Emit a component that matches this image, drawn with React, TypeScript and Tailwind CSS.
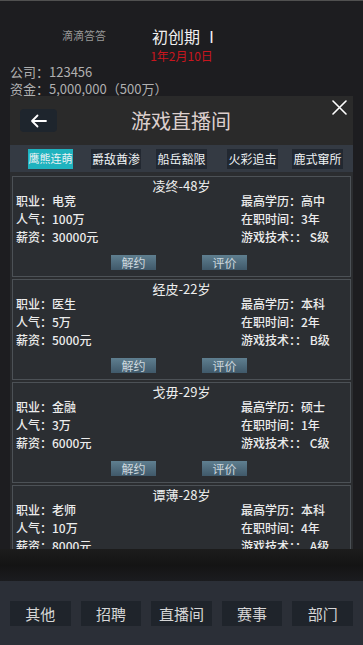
import React from 'react';

type Streamer = {
  name: string;
  job: string;
  fame: string;
  pay: string;
  edu: string;
  years: string;
  skill: string;
};

const streamers: Streamer[] = [
  { name: '凌终-48岁', job: '电竞', fame: '100万', pay: '30000元', edu: '高中', years: '3年', skill: 'S级' },
  { name: '经皮-22岁', job: '医生', fame: '5万', pay: '5000元', edu: '本科', years: '2年', skill: 'B级' },
  { name: '戈毋-29岁', job: '金融', fame: '3万', pay: '6000元', edu: '硕士', years: '1年', skill: 'C级' },
  { name: '谭薄-28岁', job: '老师', fame: '10万', pay: '8000元', edu: '本科', years: '4年', skill: 'A级' },
];

const tabs = [
  { label: '鹰熊连萌', cls: 'ml-[18px] w-[45px] bg-[#1fb3bf] text-[11px]' },
  { label: '爵敌酋渗', cls: 'ml-[18px] w-[50px] bg-[#222831] text-[12px]' },
  { label: '船岳豁限', cls: 'ml-[15px] w-[51px] bg-[#222831] text-[12px]' },
  { label: '火彩追击', cls: 'ml-[20px] w-[51px] bg-[#222831] text-[12px]' },
  { label: '鹿式窜所', cls: 'ml-[14px] w-[51px] bg-[#222831] text-[12px]' },
];

const navItems = ['其他', '招聘', '直播间', '赛事', '部门'];

function StreamerCard({ s }: { s: Streamer }) {
  return (
    <div className="h-[101px] shrink-0 border border-[#4c5156] bg-[#2b2e32] px-[3px] pt-[3px]">
      <div className="text-center text-[13px] leading-[12px] text-[#eeeeee]">{s.name}</div>
      <div className="flex text-[12px] font-medium leading-[18px] text-[#ececec]">
        <div className="w-[225px]">
          <div>职业：{s.job}</div>
          <div>人气：{s.fame}</div>
          <div>薪资：{s.pay}</div>
        </div>
        <div>
          <div>最高学历：{s.edu}</div>
          <div>在职时间：{s.years}</div>
          <div>游戏技术：：&nbsp;{s.skill}</div>
        </div>
      </div>
      <div className="mt-[9px] flex">
        <button className="ml-[95px] h-[15px] w-[45px] bg-gradient-to-b from-[#5f7f90] to-[#40596a] text-[12px] leading-[15px] text-[#cdd8de]">
          解约
        </button>
        <button className="ml-[46px] h-[15px] w-[45px] bg-gradient-to-b from-[#5f7f90] to-[#40596a] text-[12px] leading-[15px] text-[#cdd8de]">
          评价
        </button>
      </div>
    </div>
  );
}

function App() {
  return (
    <div
      className="flex h-[645px] w-[363px] flex-col overflow-hidden border-t border-[#505050] bg-[#1d1d20]"
      style={{ fontFamily: '"Noto Sans CJK SC", "Noto Sans", sans-serif' }}
    >
      {/* top status */}
      <div className="h-[95px] shrink-0">
        <div className="flex pt-[25px]">
          <span className="ml-[62px] w-[90px] pt-[1px] text-[11px] leading-[16px] text-[#9a9a9a]">滴滴答答</span>
          <span className="text-[16px] leading-[20px] text-[#f0f0f0]">初创期 Ⅰ</span>
        </div>
        <div className="mt-[2px] text-center text-[12px] leading-[16px] text-[#c8161e]">1年2月10日</div>
        <div className="mt-[-1px] pl-[10px] text-[13px] leading-[17px] text-[#b0b0b0]">
          <div>公司：123456</div>
          <div>资金：5,000,000（500万）</div>
        </div>
      </div>

      {/* modal */}
      <div className="mx-[10px] flex h-[453px] shrink-0 flex-col bg-[#2b2d30]">
        <div className="relative flex h-[49px] shrink-0 items-center bg-[#2a2a2a]">
          <button className="ml-[10px] flex h-[23px] w-[37px] items-center justify-center rounded-[4px] bg-[#1e252d]">
            <svg width="17" height="14" viewBox="0 0 17 14" fill="none" stroke="#ffffff" strokeWidth="1.8" strokeLinecap="round" strokeLinejoin="round">
              <path d="M16 7H2M7.5 1.5 2 7l5.5 5.5" />
            </svg>
          </button>
          <div className="ml-[74px] text-[20px] leading-[26px] text-[#dccfcd]">游戏直播间</div>
          <svg className="absolute right-[6px] top-[4px]" width="15" height="15" viewBox="0 0 15 15" stroke="#ffffff" strokeWidth="1.6" strokeLinecap="round">
            <path d="M1 1l13 13M14 1 1 14" />
          </svg>
        </div>

        <div className="flex h-[27px] shrink-0 items-center bg-[#343a43]">
          {tabs.map((t) => (
            <div key={t.label} className={`flex h-[20px] items-center justify-center text-[#eef2f4] ${t.cls}`}>
              {t.label}
            </div>
          ))}
        </div>

        <div className="flex min-h-0 flex-1 flex-col gap-[2px] overflow-hidden px-[2px] pt-[4px]">
          {streamers.map((s) => (
            <StreamerCard key={s.name} s={s} />
          ))}
        </div>
      </div>

      {/* shadow strip */}
      <div className="h-[32px] shrink-0 bg-gradient-to-b from-[#1c1c1c] via-[#141414] to-[#1b1c1f]" />

      {/* bottom nav */}
      <div className="flex flex-1 gap-[10px] bg-[#2b2f37] px-[10px] pt-[20px]">
        {navItems.map((n) => (
          <button key={n} className="h-[25px] flex-1 bg-[#1f242b] text-[15px] leading-[25px] text-[#d6d6d6]">
            {n}
          </button>
        ))}
      </div>
    </div>
  );
}

export default App;
